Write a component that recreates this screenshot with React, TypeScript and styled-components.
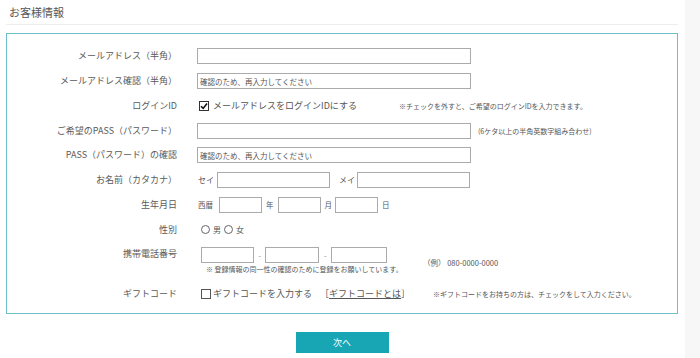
import React from 'react'
import styled, { createGlobalStyle } from 'styled-components'

const GlobalStyle = createGlobalStyle`
	html, body {
		margin: 0;
		padding: 0;
		background: #fff;
	}
	body {
		font-family: 'Noto Sans CJK JP', 'Noto Sans', sans-serif;
		color: #555;
	}
`

const Page = styled.div`
	display: flex;
	min-height: 358px;
`

const Main = styled.div`
	width: 685px;
	box-sizing: border-box;
	padding: 0 7px 0 6px;
`

const Aside = styled.div`
	flex: 1;
	background: #f7f7f7;
`

const Title = styled.h2`
	margin: 0;
	height: 24px;
	line-height: 24px;
	padding-left: 3px;
	font-size: 11px;
	font-weight: 400;
	color: #555;
	border-bottom: 1px solid #ededed;
`

const FormBox = styled.div`
	margin-top: 8px;
	border: 1px solid #6cbfc6;
	padding: 10px 0 6.6px;
`

const Row = styled.div<{ $h?: number; $top?: boolean }>`
	display: flex;
	align-items: ${(p) => (p.$top ? 'flex-start' : 'center')};
	min-height: ${(p) => p.$h ?? 24.75}px;
`

const Label = styled.div<{ $top?: boolean }>`
	width: 170px;
	flex: none;
	margin-right: 20px;
	text-align: right;
	font-size: 9px;
	line-height: ${(p) => (p.$top ? '24px' : '12px')};
	color: #5a5a5a;
`

const Field = styled.div<{ $w?: number; $indent?: number; $pt?: number }>`
	display: flex;
	align-items: center;
	flex: none;
	width: ${(p) => (p.$w ? `${p.$w}px` : 'auto')};
	padding-left: ${(p) => p.$indent ?? 0}px;
	padding-top: ${(p) => p.$pt ?? 0}px;
	box-sizing: border-box;
`

const Stack = styled.div<{ $w: number; $indent?: number; $pt?: number }>`
	display: flex;
	flex-direction: column;
	width: ${(p) => p.$w}px;
	padding-left: ${(p) => p.$indent ?? 0}px;
	padding-top: ${(p) => p.$pt ?? 0}px;
	box-sizing: border-box;
	flex: none;
`

const TextInput = styled.input<{ $w: number }>`
	width: ${(p) => p.$w}px;
	height: 16px;
	box-sizing: border-box;
	margin: 0;
	padding: 0 2px;
	border: 1px solid #ababab;
	border-radius: 0;
	background: #fff;
	font-family: 'Noto Sans CJK JP', sans-serif;
	font-size: 7.5px;
	color: #444;
	outline: none;
	&::placeholder {
		color: #555;
		opacity: 1;
	}
`

const Inline = styled.span<{ $size?: number; $ml?: number; $mr?: number }>`
	font-size: ${(p) => p.$size ?? 8}px;
	margin-left: ${(p) => p.$ml ?? 0}px;
	margin-right: ${(p) => p.$mr ?? 0}px;
	color: #555;
	white-space: nowrap;
	line-height: 12px;
`

const Note = styled.span<{ $size?: number }>`
	font-size: ${(p) => p.$size ?? 7}px;
	color: #555;
	white-space: nowrap;
	line-height: 10px;
`

const PhoneNote = styled(Note)`
	margin: 1px 0 0 5px;
`

const Box = styled.span<{ $checked?: boolean }>`
	display: inline-flex;
	align-items: center;
	justify-content: center;
	width: 10px;
	height: 10px;
	box-sizing: border-box;
	border: 1px solid ${(p) => (p.$checked ? '#333' : '#555')};
	background: #fff;
	margin-right: ${(p) => (p.$checked ? 4 : 2)}px;
	flex: none;
`

const Radio = styled.span`
	display: inline-block;
	width: 9px;
	height: 9px;
	box-sizing: border-box;
	border: 1px solid #666;
	border-radius: 50%;
	margin-right: 3px;
	flex: none;
`

const LinkText = styled.span`
	text-decoration: underline;
	text-underline-offset: 1px;
`

const Dash = styled.span`
	font-size: 7px;
	color: #777;
	margin: 0 4.5px;
`

const ButtonRow = styled.div`
	display: flex;
	justify-content: center;
	margin-top: 18px;
`

const NextButton = styled.button`
	width: 93px;
	height: 21px;
	border: none;
	background: #18a6b5;
	color: #fff;
	font-family: 'Noto Sans CJK JP', sans-serif;
	font-size: 9px;
	padding: 0;
	cursor: pointer;
`

const Check = () => (
	<svg width="8" height="8" viewBox="0 0 8 8">
		<path d="M1 4.2 L3.2 6.4 L7 1.6" fill="none" stroke="#111" strokeWidth="1.6" />
	</svg>
)

export default function App() {
	return (
		<>
			<GlobalStyle />
			<Page>
				<Main>
					<Title>お客様情報</Title>
					<FormBox>
						<Row>
							<Label>メールアドレス（半角）</Label>
							<TextInput $w={274} />
						</Row>
						<Row>
							<Label>メールアドレス確認（半角）</Label>
							<TextInput $w={274} placeholder="確認のため、再入力してください" />
						</Row>
						<Row>
							<Label>ログインID</Label>
							<Field $w={202} $indent={2}>
								<Box $checked>
									<Check />
								</Box>
								<Inline $size={9}>メールアドレスをログインIDにする</Inline>
							</Field>
							<Note>※チェックを外すと、ご希望のログインIDを入力できます。</Note>
						</Row>
						<Row>
							<Label>ご希望のPASS（パスワード）</Label>
							<TextInput $w={274} />
							<Inline $size={7} $ml={7}>(6ケタ以上の半角英数字組み合わせ)</Inline>
						</Row>
						<Row>
							<Label>PASS（パスワード）の確認</Label>
							<TextInput $w={274} placeholder="確認のため、再入力してください" />
						</Row>
						<Row>
							<Label>お名前（カタカナ）</Label>
							<Field $indent={1}>
								<Inline $mr={3}>セイ</Inline>
								<TextInput $w={113} />
								<Inline $ml={9} $mr={2}>メイ</Inline>
								<TextInput $w={113} />
							</Field>
						</Row>
						<Row>
							<Label>生年月日</Label>
							<Field $indent={1}>
								<Inline $size={7.5} $mr={6}>西暦</Inline>
								<TextInput $w={43} />
								<Inline $size={7.5} $ml={4} $mr={4}>年</Inline>
								<TextInput $w={43} />
								<Inline $size={7.5} $ml={4} $mr={3}>月</Inline>
								<TextInput $w={43} />
								<Inline $size={7.5} $ml={4}>日</Inline>
							</Field>
						</Row>
						<Row>
							<Label>性別</Label>
							<Field $indent={4}>
								<Radio />
								<Inline $mr={3}>男</Inline>
								<Radio />
								<Inline>女</Inline>
							</Field>
						</Row>
						<Row $h={39.6} $top>
							<Label $top>携帯電話番号</Label>
							<Stack $w={226} $indent={4} $pt={5}>
								<Field>
									<TextInput $w={53} />
									<Dash>-</Dash>
									<TextInput $w={54} />
									<Dash>-</Dash>
									<TextInput $w={56} />
								</Field>
								<PhoneNote>※ 登録情報の同一性の確認のために登録をお願いしています。</PhoneNote>
							</Stack>
							<Field $pt={16}>
								<Note $size={7.5}>（例） 080-0000-0000</Note>
							</Field>
						</Row>
						<Row>
							<Label>ギフトコード</Label>
							<Field $w={236} $indent={4}>
								<Box />
								<Inline $size={9}>ギフトコードを入力する</Inline>
								<Inline $size={9} $ml={8}>
									［<LinkText>ギフトコードとは</LinkText>］
								</Inline>
							</Field>
							<Note>※ギフトコードをお持ちの方は、チェックをして入力ください。</Note>
						</Row>
					</FormBox>
					<ButtonRow>
						<NextButton>次へ</NextButton>
					</ButtonRow>
				</Main>
				<Aside />
			</Page>
		</>
	)
}
